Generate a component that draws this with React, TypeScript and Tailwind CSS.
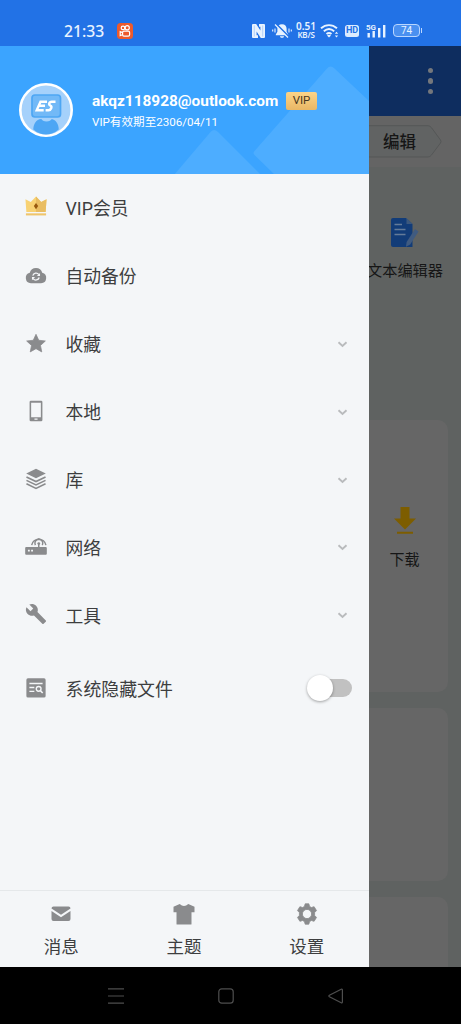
import React, { useState } from "react";

const FONT = "font-['Roboto','Noto_Sans_CJK_SC',sans-serif]";

function StatusBar() {
  return (
    <header className="flex h-[45.500px] shrink-0 items-center bg-[#2272e6] pl-[64px] pt-[16px] text-[#e8f3ff]">
      <span className="w-[53px] font-['Noto_Sans',sans-serif] text-[15.700px] leading-[20px] font-medium whitespace-nowrap">21:33</span>
      <svg className="block" width="16" height="16" viewBox="0 0 16 16" fill="none">
        <rect width="16" height="16" rx="3.5" fill="#ed5a2c" />
        <g stroke="#fff" strokeWidth="1.2">
          <circle cx="6" cy="4.9" r="1.8" />
          <circle cx="10.2" cy="4.7" r="2.1" />
          <rect x="5.6" y="8.2" width="7" height="4.9" rx="1.3" />
          <path d="M5.6 9.6 3.2 8.7v3.9l2.4-.9" />
        </g>
      </svg>
      <svg className="ml-[119px] block" width="13" height="14" viewBox="0 0 13 14">
        <path d="M0 1Q0 0 1 0H4.200L8.400 6.600V2.800H7V0h5Q13 0 13 1v12Q13 14 12 14H8.800L4.600 7.400v3.800H6V14H1Q0 14 0 13Z" fill="currentColor" />
        <path d="M2.300 1.500v11M10.700 1.500v11" stroke="#2272e6" strokeWidth=".5" opacity=".5" />
      </svg>
      <svg className="ml-[7px] block" width="20" height="16" viewBox="0 0 20 16" fill="none">
        <path d="M10 1.200c-3 0-4.600 2-4.600 4.600v3L3.800 11.400v.8h12.400v-.8l-1.600-2.600v-3C14.600 3.200 13 1.200 10 1.200ZM8 13.200h4c0 2.200-4 2.200-4 0Z" fill="currentColor" />
        <path d="m4 1 13 13" stroke="#2272e6" strokeWidth="2" />
        <path d="m3 1.500 13 13" stroke="currentColor" strokeWidth="1.200" />
        <path d="M3 5.500v4M.7 6.500v2M17 5.500v4M19.300 6.500v2" stroke="currentColor" strokeWidth="1.100" />
      </svg>
      <div className="ml-[3px] flex w-[22px] flex-col items-center font-['Noto_Sans',sans-serif] font-semibold whitespace-nowrap">
        <span className="text-[10px] leading-[9px]">0.51</span>
        <span className="text-[8px] leading-[8px] tracking-tight">KB/S</span>
      </div>
      <svg className="ml-[3px] block" width="20" height="16" viewBox="0 0 20 16" fill="none" stroke="currentColor" strokeWidth="1.900">
        <path d="M1 5.300c4.800-4.300 11.200-4.300 16 0M3.800 8.300c3.200-2.800 7.200-2.800 10.400 0M6.500 11.100c1.600-1.300 3.400-1.300 5 0" />
        <path d="m9 14.500-2-2q2-1.500 4 0Z" fill="currentColor" stroke="none" />
        <path d="m16.500 8.700 1.700 2h-3.400Zm0 5.800 1.700-2h-3.400Z" fill="currentColor" stroke="none" />
      </svg>
      <span className="ml-[5px] flex h-[12px] w-[14px] items-center justify-center rounded-[2.500px] bg-[#dcecff] text-[9px] leading-none font-bold text-[#2272e6]">HD</span>
      <svg className="ml-[7px] block" width="20" height="16" viewBox="0 0 20 16">
        <text x="0" y="6.500" fontSize="8" fontWeight="700" fontFamily="Roboto" fill="currentColor">5G</text>
        <path d="M1.500 10h2.400v4.500H1.500ZM6.500 8h2.400v6.500H6.500ZM12 5h2.400v9.500H12ZM17 2h2.400v12.500H17Z" fill="currentColor" />
      </svg>
      <span className="ml-[7px] flex h-[13px] w-[27px] items-center justify-center rounded-[4px] border border-[#b9d6ff] bg-[#4a90f0] text-[10px] leading-none">74</span>
      <span className="ml-px h-[5px] w-px bg-[#b9d6ff]" />
    </header>
  );
}

function Avatar() {
  return (
    <svg className="block shrink-0" width="54" height="54" viewBox="0 0 54 54">
      <circle cx="27" cy="27" r="25.700" fill="#a5d1fb" stroke="#fff" strokeWidth="2.600" />
      <path d="M14.300 46.500c0-5 2.700-10.500 8-10.500h9.400c5.300 0 8 5.500 8 10.500C32 53.300 22 53.300 14.300 46.500Z" fill="#4da6f4" />
      <path d="M22 35.500h11q-1.500 3-5.500 3t-5.500-3Z" fill="#a5d1fb" />
      <rect x="13" y="12" width="28.500" height="22" rx="3" fill="#72b9f7" stroke="#4da6f4" strokeWidth="1.700" />
      <g fill="none" stroke="#fff" strokeWidth="2.400">
        <path d="M28 18.700h-6.500l-3.800 8.500h7M19.500 22.800h6.500" />
        <path d="M36.500 18.700h-3.700c-3 0-3.300 3.200-1.400 4 2 .8.800 4.500-1.800 4.500h-3" />
      </g>
    </svg>
  );
}

function ProfileHeader() {
  return (
    <section className="relative flex h-[128px] shrink-0 items-center overflow-hidden bg-[#3ba4ff] pl-[19px]">
      <svg className="absolute inset-0" width="369" height="129" viewBox="0 0 369 129">
        <path d="M174 129 210.500 86q3.500-4 7.500 0l43 43Z" fill="#4dadff" />
        <path d="M254.500 105 327 22.500q3.500-4 7.500 0L369 55v74H275L254.500 109q-2-2 0-4Z" fill="#4dadff" />
      </svg>
      <div className="relative flex items-center">
        <Avatar />
        <div className="ml-[19px] flex flex-col pt-[2px] text-white">
          <div className="flex items-center">
            <span className="w-[194px] text-[15.400px] leading-[20px] font-bold whitespace-nowrap">akqz118928@outlook.com</span>
            <span className="flex h-[18px] w-[31px] items-center justify-center rounded-[2px] bg-linear-to-b from-[#fcd488] to-[#e9b765] pt-px text-[11.500px] text-[#4b3820]">VIP</span>
          </div>
          <span className="mt-[3px] text-[11.600px] leading-[17px] whitespace-nowrap">VIP有效期至2306/04/11</span>
        </div>
      </div>
    </section>
  );
}

const icons: Record<string, React.ReactNode> = {
  crown: (
    <>
      <path d="m.5 3.500 5.800 3L12 .5l5.700 6 5.800-3-1 14h-21Z" fill="#f8d273" />
      <path d="m12 .5 5.700 6 5.800-3-1 14H12Z" fill="#e9bd62" />
      <path d="M1 18.900h22v2.300H1Z" fill="#efc56b" />
      <path d="m12 7.500 2.400 3.500-2.400 3.500-2.400-3.500Z" fill="#97590f" />
    </>
  ),
  cloud: (
    <>
      <path d="M6.500 21a5.800 5.800 0 0 1-1.300-11.400 7 7 0 0 1 13.600 0A5.800 5.800 0 0 1 17.500 21Z" />
      <path d="M8.500 12.700a3.700 3.700 0 0 1 6.600-1.200M15.500 14.700a3.700 3.700 0 0 1-6.600 1.200" fill="none" stroke="#f4f6f8" strokeWidth="1.400" />
      <path d="M16.400 9.800v3.400h-3.400ZM7.600 17.600v-3.400h3.400Z" fill="#f4f6f8" />
    </>
  ),
  star: <path d="m12 2.500 3 6.500 7.200.8-5.300 4.900 1.400 7L12 18.200l-6.300 3.500 1.400-7L1.800 9.800 9 9Z" strokeLinejoin="round" stroke="currentColor" strokeWidth=".8" />,
  phone: (
    <path fillRule="evenodd" d="M6.500.8h11q1.500 0 1.500 1.500v19.400q0 1.500-1.500 1.500h-11Q5 23.200 5 21.700V2.300Q5 .8 6.500.8ZM6.700 3v15.800h10.600V3Zm3.600 17.200v1.400h3.400v-1.400Z" />
  ),
  layers: (
    <>
      <path d="m12 .8 10.700 5.200L12 11.200 1.300 6Z" />
      <path d="m1.600 9.700 10.400 5 10.400-5M1.600 13.500l10.400 5 10.400-5M1.600 17.300l10.400 5 10.400-5" fill="none" stroke="currentColor" strokeWidth="1.800" />
    </>
  ),
  router: (
    <>
      <path fillRule="evenodd" d="M1.300 13h21.400q1.100 0 1.100 1.100v6.400q0 1.100-1.100 1.100H1.300Q.2 21.600.2 20.500v-6.400Q.2 13 1.300 13Zm1.900 3v2h2v-2Zm3.500 0v2h2v-2Z" />
      <path d="M15 13V9M11.300 11a4.300 4.300 0 1 1 7.600 0M7.300 11a7.900 7.900 0 0 1 15.500 0" fill="none" stroke="currentColor" strokeWidth="1.600" />
      <circle cx="15" cy="9.300" r="1.500" />
    </>
  ),
  wrench: <path d="m22.700 19-9.100-9.100c.9-2.300.4-5-1.500-6.900-2-2-5-2.400-7.400-1.300L9 6 6 9 1.600 4.700C.4 7.100.9 10.100 2.900 12.100c1.900 1.900 4.600 2.400 6.900 1.500l9.100 9.100c.4.400 1 .4 1.400 0l2.300-2.300c.5-.4.5-1.100.1-1.400Z" />,
  hidden: (
    <>
      <rect x="1.500" y="2.500" width="21" height="21" rx="1.800" />
      <path d="M4.800 8.200h14.400M4.800 12.500h5.400M4.800 16.800h5.400" fill="none" stroke="#f4f6f8" strokeWidth="1.500" />
      <circle cx="14.900" cy="14" r="2.600" fill="none" stroke="#f4f6f8" strokeWidth="1.500" />
      <path d="m16.800 16 2.500 2.500" stroke="#f4f6f8" strokeWidth="1.700" />
    </>
  ),
};

function MenuIcon({ name }: { name: string }) {
  return (
    <svg className="mb-[2px] block shrink-0 text-[#8a8b8d]" width="22" height="22" viewBox="0 0 24 24" fill="currentColor">
      {icons[name]}
    </svg>
  );
}

const menu = [
  { icon: "crown", label: "VIP会员", expandable: false },
  { icon: "cloud", label: "自动备份", expandable: false },
  { icon: "star", label: "收藏", expandable: true },
  { icon: "phone", label: "本地", expandable: true },
  { icon: "layers", label: "库", expandable: true },
  { icon: "router", label: "网络", expandable: true },
  { icon: "wrench", label: "工具", expandable: true },
];

function MenuRow({ icon, label, expandable }: { icon: string; label: string; expandable: boolean }) {
  return (
    <li className="flex h-[67.900px] items-center pt-px pr-[21px] pl-[25px]">
      <MenuIcon name={icon} />
      <span className="ml-[18.500px] flex-1 pt-[3px] text-[17.800px] leading-[26px]">{label}</span>
      {expandable && (
        <svg className="block" width="11" height="8" viewBox="0 0 11 8" fill="none" stroke="#b9bbbd" strokeWidth="1.900">
          <path d="M1.500 2.300 5.500 5.900 9.500 2.300" />
        </svg>
      )}
    </li>
  );
}

function Drawer() {
  const [showHidden, setShowHidden] = useState(false);
  return (
    <aside className="flex w-[369px] shrink-0 flex-col bg-[#f4f6f8] text-[#3d3e3f]">
      <ProfileHeader />
      <ul>
        {menu.map((m) => (
          <MenuRow key={m.icon} {...m} />
        ))}
        <li className="flex h-[77px] items-center pt-[2px] pr-[17px] pl-[25px]">
          <MenuIcon name="hidden" />
          <span className="ml-[18.500px] flex-1 pt-[3px] text-[17.900px] leading-[26px]">系统隐藏文件</span>
          <button
            role="switch"
            aria-checked={showHidden}
            aria-label="系统隐藏文件"
            onClick={() => setShowHidden(!showHidden)}
            className={showHidden ? "flex h-[18px] w-[38px] items-center justify-end rounded-full bg-[#3ba4ff]" : "flex h-[18px] w-[38px] items-center rounded-full bg-[#c1c1c1]"}
          >
            <span className="-ml-[7px] size-[26px] shrink-0 rounded-full bg-white shadow-[0_1px_3px_rgba(0,0,0,0.35)]" />
          </button>
        </li>
      </ul>
      <footer className="mt-auto flex h-[77px] border-t border-[#e5e8ea] pt-[12px] pr-px text-[17.500px] leading-[25px]">
        <div className="flex flex-1 flex-col items-center gap-[10px]">
          <svg className="block text-[#8a8b8d]" width="22" height="22" viewBox="0 0 22 22" fill="currentColor">
            <path d="M1.500 5.500q0-2 2-2h15q2 0 2 2L11 11.800ZM1.500 8l9.500 6.200L20.500 8v8q0 2-2 2h-15q-2 0-2-2Z" />
          </svg>
          <span>消息</span>
        </div>
        <div className="flex flex-1 flex-col items-center gap-[10px]">
          <svg className="block text-[#8a8b8d]" width="22" height="22" viewBox="0 0 22 22" fill="currentColor">
            <path d="M6.700 1q4.300 4 8.600 0l6.200 2.700v5.600h-3V21q0 .6-.6.600H4.100q-.6 0-.6-.600V9.300h-3V3.700Z" />
          </svg>
          <span>主题</span>
        </div>
        <div className="flex flex-1 flex-col items-center gap-[10px]">
          <svg className="block text-[#8a8b8d]" width="22" height="22" viewBox="0 0 22 22" fill="currentColor" stroke="currentColor" strokeWidth=".8" strokeLinejoin="round">
            <path fillRule="evenodd" d="M9.200.8h3.600l.8 2.700 1.800 1 2.700-.8 2.400 3.900-1.900 2v2.800l1.900 2-2.400 3.900-2.700-.8-1.800 1-.8 2.700H9.200l-.8-2.700-1.800-1-2.700.8-2.400-3.900 1.900-2V9.600l-1.900-2 2.400-3.900 2.700.8 1.800-1ZM11 6.400a4.600 4.600 0 1 0 0 9.200 4.600 4.600 0 0 0 0-9.200Z" />
          </svg>
          <span>设置</span>
        </div>
      </footer>
    </aside>
  );
}

function DimmedPage() {
  return (
    <main className="flex min-w-0 flex-1 flex-col overflow-hidden bg-[#5f6261] text-[#161616]">
      <div className="flex h-[70.500px] shrink-0 flex-col items-end justify-center gap-[5px] bg-[#0e2d5f] pr-[28px]">
        <i className="size-[5.500px] rounded-full bg-[#74777c]" />
        <i className="size-[5.500px] rounded-full bg-[#74777c]" />
        <i className="size-[5.500px] rounded-full bg-[#74777c]" />
      </div>
      <div className="relative flex h-[51px] shrink-0 items-center bg-[#646464]">
        <svg className="absolute top-[9px] left-0" width="73" height="34" viewBox="0 0 73 34">
          <path d="M-2 .7H59q2 0 3.500 2L71.500 15q1 1.500 0 3L62.500 30q-1.500 2-3.500 2H-2Z" fill="#616363" stroke="#555757" />
        </svg>
        <span className="relative ml-[14px] pt-[3px] text-[16.500px] leading-[24px] font-medium">编辑</span>
      </div>
      <div className="flex h-[253px] w-[72px] shrink-0 flex-col items-center pt-[50px]">
        <svg className="block" width="30" height="31" viewBox="0 0 30 31">
          <path d="M3 1h13l6.500 6v23H3q-2 0-2-2V3q0-2 2-2Z" fill="#123c78" />
          <path d="M16.500 1v6h6Z" fill="#3c587d" />
          <path d="M4.500 7.500h7.500M4.500 12.500h11M4.500 17.500h11" stroke="#647b99" strokeWidth="1.700" />
          <path d="m25 12 3.500 2.500-8.300 13-4.200 2.300.6-4.700Z" fill="#405b80" />
        </svg>
        <span className="mt-[12px] text-[15.200px] leading-[22px] whitespace-nowrap">文本编辑器</span>
      </div>
      <div className="flex h-[272px] w-[79px] shrink-0 flex-col rounded-tr-[10px] rounded-br-[10px] bg-[#666666]">
        <div className="flex w-[71px] flex-col items-center pt-[86px]">
          <svg className="block" width="24" height="29" viewBox="0 0 24 29" fill="#7d5d00">
            <path d="M7.500 1h9v11.500h6.500L12 23.500 1 12.500h6.500ZM4 25.800h16v2H4Z" />
          </svg>
          <span className="mt-[14px] text-[15px] leading-[22px]">下载</span>
        </div>
      </div>
      <div className="mt-[16px] h-[173px] w-[79px] shrink-0 rounded-r-[10px] bg-[#666666]" />
      <div className="mt-[16px] h-[90px] w-[79px] shrink-0 rounded-tr-[10px] bg-[#666666]" />
    </main>
  );
}

function NavigationBar() {
  return (
    <nav className="flex h-[57px] shrink-0 items-center justify-center gap-[94px] bg-black pr-[9px]">
      <svg className="block" width="16" height="16" viewBox="0 0 16 16" stroke="#4e4e4e" strokeWidth="1.200">
        <path d="M0 .8h16M0 8h16M0 15.200h16" />
      </svg>
      <svg className="block" width="16" height="16" viewBox="0 0 16 16" fill="none" stroke="#4e4e4e" strokeWidth="1.200">
        <rect x=".8" y=".8" width="14.400" height="14.400" rx="3" />
      </svg>
      <svg className="block" width="16" height="16" viewBox="0 0 16 16" fill="none" stroke="#4e4e4e" strokeWidth="1.200">
        <path d="M13.200 1.200 1.400 7.300q-1 .7 0 1.400l11.800 6.100q1.200.5 1.200-.8V2q0-1.300-1.200-.8Z" />
      </svg>
    </nav>
  );
}

export default function App() {
  return (
    <div className={`flex h-[1024px] w-[461px] flex-col overflow-hidden ${FONT}`}>
      <StatusBar />
      <div className="flex h-[921.500px] shrink-0">
        <Drawer />
        <DimmedPage />
      </div>
      <NavigationBar />
    </div>
  );
}
